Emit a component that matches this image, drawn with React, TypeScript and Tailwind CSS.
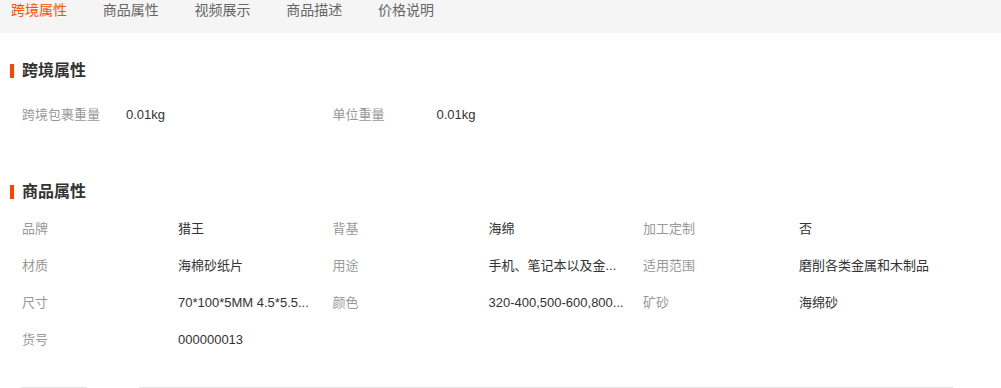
import React from "react";

const font = { fontFamily: '"Liberation Sans", "Noto Sans CJK SC", sans-serif' };

const tabs = ["跨境属性", "商品属性", "视频展示", "商品描述", "价格说明"];

const cross = [
  ["跨境包裹重量", "0.01kg"],
  ["单位重量", "0.01kg"],
];

const attrs: [string, string][] = [
  ["品牌", "猎王"],
  ["背基", "海绵"],
  ["加工定制", "否"],
  ["材质", "海棉砂纸片"],
  ["用途", "手机、笔记本以及金..."],
  ["适用范围", "磨削各类金属和木制品"],
  ["尺寸", "70*100*5MM 4.5*5.5..."],
  ["颜色", "320-400,500-600,800..."],
  ["矿砂", "海绵砂"],
  ["货号", "000000013"],
];

function Title({ children }: { children: React.ReactNode }) {
  return (
    <div className="flex items-center h-[20px] pl-[10px]">
      <div className="w-[4px] h-[14px] bg-[#ff4400]" />
      <div className="ml-[8px] text-[16px] leading-[20px] font-bold text-[#333]">{children}</div>
    </div>
  );
}

export default function App() {
  return (
    <div className="w-[1001px] h-[388px] bg-white overflow-hidden text-[13px]" style={font}>
      <div className="h-[33px] bg-[#f5f5f5] flex pl-[11px] gap-[35.75px]">
        {tabs.map((t, i) => (
          <div
            key={t}
            className={`text-[14px] leading-[20px] ${i === 0 ? "text-[#ff5000]" : "text-[#666]"}`}
          >
            {t}
          </div>
        ))}
      </div>

      <div className="mt-[28px]">
        <Title>跨境属性</Title>
        <div className="mt-[24px] pl-[22px] grid grid-cols-[310.5px_310.5px_310.5px]">
          {cross.map(([k, v]) => (
            <div key={k} className="flex h-[20px] leading-[20px]">
              <div className="w-[104px] text-[#999]">{k}</div>
              <div className="text-[#333]">{v}</div>
            </div>
          ))}
        </div>
      </div>

      <div className="mt-[56.5px]">
        <Title>商品属性</Title>
        <div className="mt-[17px] pl-[22px] grid grid-cols-[310.5px_310.5px_310.5px] gap-y-[17.33px]">
          {attrs.map(([k, v]) => (
            <div key={k} className="flex h-[20px] leading-[20px]">
              <div className="w-[156px] shrink-0 text-[#999]">{k}</div>
              <div className="whitespace-nowrap text-[#333]">{v}</div>
            </div>
          ))}
        </div>
      </div>

      <div className="mt-[36.5px] flex">
        <div className="ml-[21px] w-[66px] h-px bg-[#e5e5e5]" />
        <div className="ml-[52px] w-[814px] h-px bg-[#e5e5e5]" />
      </div>
    </div>
  );
}
